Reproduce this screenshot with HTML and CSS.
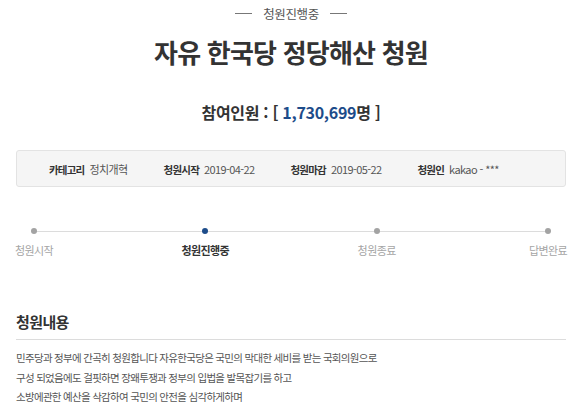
FILE: index.html
```html
<!DOCTYPE html>
<html lang="ko">
<head>
<meta charset="utf-8">
<link rel="stylesheet" href="styles.css">
</head>
<body>
<div class="page">
  <div class="status"><span class="dash"></span><span>청원진행중</span><span class="dash"></span></div>
  <h1 class="title">자유 한국당 정당해산 청원</h1>
  <p class="count">참여인원 : [ <span class="num">1,730,699</span>명 ]</p>
  <ul class="info">
    <li><strong>카테고리</strong><span>정치개혁</span></li>
    <li><strong>청원시작</strong><span>2019-04-22</span></li>
    <li><strong>청원마감</strong><span>2019-05-22</span></li>
    <li><strong>청원인</strong><span>kakao - ***</span></li>
  </ul>
  <ol class="steps">
    <li class="step"><i class="dot"></i><span>청원시작</span></li>
    <li class="step on"><i class="dot"></i><span>청원진행중</span></li>
    <li class="step"><i class="dot"></i><span>청원종료</span></li>
    <li class="step"><i class="dot"></i><span>답변완료</span></li>
  </ol>
  <h2 class="heading">청원내용</h2>
  <div class="content">
    <p>민주당과 정부에 간곡히 청원합니다 자유한국당은 국민의 막대한 세비를 받는 국회의원으로</p>
    <p>구성 되었음에도 걸핏하면 장왜투쟁과 정부의 입법을 발목잡기를 하고</p>
    <p>소방에관한 예산을 삭감하여 국민의 안전을 심각하게하며</p>
  </div>
</div>
</body>
</html>
```

FILE: styles.css
```css
* { box-sizing: border-box; }
html, body { margin: 0; padding: 0; background: #fff; }
body {
  font-family: "Noto Sans CJK KR", "Noto Sans", sans-serif;
  color: #333;
  overflow: hidden;
}
.page { padding: 0 14px 0 16px; }

.status {
  display: flex;
  justify-content: center;
  align-items: center;
  gap: 11px;
  margin: 5px 0 0;
  height: 16px;
  font-size: 12.5px;
  color: #555;
  letter-spacing: -0.4px;
}
.dash { width: 17px; height: 1px; background: #777; }

.title {
  margin: 16px 0 0;
  text-align: center;
  font-size: 26px;
  line-height: 30px;
  font-weight: 700;
  color: #333;
  letter-spacing: -0.8px;
}

.count {
  margin: 34px 0 0;
  text-align: center;
  font-size: 16px;
  line-height: 22px;
  font-weight: 700;
  color: #333;
  letter-spacing: -0.3px;
}
.num { color: #1d4c8a; }

.info {
  list-style: none;
  margin: 27px 0 0;
  padding: 0 0 0 32px;
  height: 37px;
  display: flex;
  align-items: center;
  gap: 36px;
  background: #f5f5f5;
  border: 1px solid #e3e3e3;
  border-radius: 3px;
  font-size: 11px;
}
.info li { display: flex; align-items: baseline; gap: 5px; white-space: nowrap; }
.info strong { font-size: 10.5px; font-weight: 700; color: #333; letter-spacing: -0.8px; }
.info span { color: #555; letter-spacing: -0.6px; }

.steps {
  list-style: none;
  margin: 41px 0 0;
  padding: 0;
  display: grid;
  grid-template-columns: repeat(4, 36px);
  justify-content: space-between;
  position: relative;
}
.steps::before {
  content: "";
  position: absolute;
  left: 18px;
  right: 18px;
  top: 3px;
  height: 1px;
  background: #dcdcdc;
}
.step {
  display: flex;
  flex-direction: column;
  align-items: center;
  position: relative;
}
.dot {
  display: block;
  width: 6px;
  height: 6px;
  border-radius: 50%;
  background: #a3a3a3;
}
.step span {
  margin-top: 9px;
  font-size: 11px;
  line-height: 15px;
  color: #a5a5a5;
  white-space: nowrap;
  letter-spacing: -0.6px;
}
.step.on .dot { background: #1d4c8a; }
.step.on span { color: #333; font-weight: 700; }

.heading {
  margin: 54px 0 0;
  font-size: 15px;
  line-height: 20px;
  font-weight: 700;
  color: #333;
  letter-spacing: -0.6px;
  padding-bottom: 7px;
  border-bottom: 1px solid #dcdcdc;
}

.content { padding-top: 8px; }
.content p {
  margin: 0;
  font-size: 10.5px;
  line-height: 19.5px;
  color: #555;
  letter-spacing: -0.7px;
  white-space: nowrap;
}
```
